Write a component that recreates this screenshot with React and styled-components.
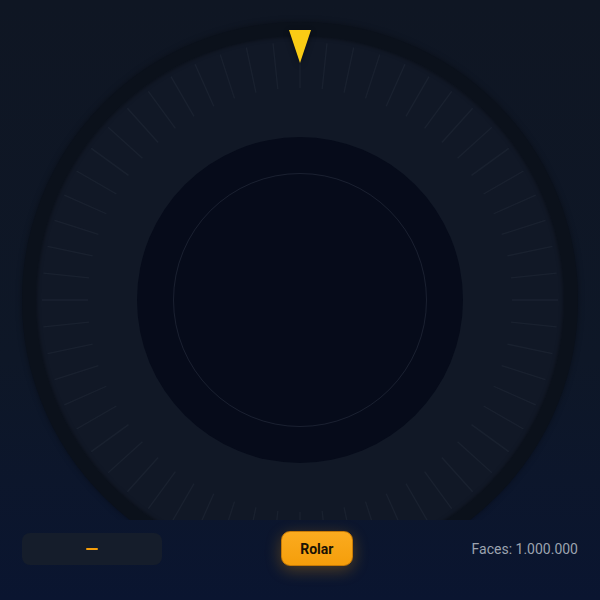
import React from 'react';
import styled, { createGlobalStyle } from 'styled-components';

const TICKS = 60;

const Global = createGlobalStyle`
  html, body {
    margin: 0;
    padding: 0;
    height: 100%;
  }
  body {
    background: linear-gradient(180deg, #0f1623 0%, #0e1727 60%, #0a1530 100%);
    font-family: Roboto, "Liberation Sans", sans-serif;
  }
`;

const Page = styled.div`
  width: 600px;
  height: 600px;
  display: flex;
  flex-direction: column;
  overflow: hidden;
`;

const Stage = styled.div`
  height: 520px;
  padding-top: 22px;
  box-sizing: border-box;
  overflow: hidden;
  display: flex;
  justify-content: center;
`;

const Wheel = styled.div`
  position: relative;
  width: 556px;
  height: 556px;
  flex-shrink: 0;
  box-sizing: border-box;
  border-radius: 50%;
  border: 14px solid #0b111b;
  background: #111826;
  box-shadow: 0 0 6px rgba(0, 0, 0, 0.35), inset 0 0 4px rgba(0, 0, 0, 0.5);
  display: flex;
  align-items: center;
  justify-content: center;
`;

const Ticks = styled.svg`
  position: absolute;
  inset: 0;
  width: 100%;
  height: 100%;
`;

const Hub = styled.div`
  width: 326px;
  height: 326px;
  border-radius: 50%;
  background: #060b1a;
  display: flex;
  align-items: center;
  justify-content: center;
  position: relative;
`;

const HubRing = styled.div`
  width: 254px;
  height: 254px;
  box-sizing: border-box;
  border-radius: 50%;
  border: 1.5px solid rgba(148, 163, 184, 0.14);
`;

const Pointer = styled.div`
  position: absolute;
  top: -6px;
  left: 50%;
  transform: translateX(-50%);
  width: 0;
  height: 0;
  border-left: 11px solid transparent;
  border-right: 11px solid transparent;
  border-top: 33px solid #facc15;
  filter: drop-shadow(0 2px 3px rgba(0, 0, 0, 0.4));
`;

const Controls = styled.div`
  flex: 1;
  display: flex;
  align-items: flex-start;
  justify-content: space-between;
  padding: 11px 22px 0;
`;

const Display = styled.div`
  width: 140px;
  height: 32px;
  margin-top: 2px;
  border-radius: 8px;
  background: #151d2b;
  display: flex;
  align-items: center;
  justify-content: center;
`;

const Dash = styled.span`
  display: block;
  width: 12px;
  height: 2px;
  border-radius: 1px;
  background: #f59e0b;
`;

const RollButton = styled.button`
  width: 72px;
  height: 35px;
  border: 1px solid #c77a06;
  border-radius: 9px;
  background: linear-gradient(180deg, #fbab1f 0%, #f59e0b 100%);
  color: #1a1204;
  font-family: Roboto, "Liberation Sans", sans-serif;
  font-size: 14px;
  font-weight: 700;
  box-shadow: 0 4px 16px rgba(245, 158, 11, 0.3);
  cursor: pointer;
`;

const Faces = styled.div`
  height: 35px;
  display: flex;
  align-items: center;
  color: #9ca3af;
  font-size: 14px;
`;

function TickMarks() {
  const c = 264;
  const lines = [];
  for (let i = 0; i < TICKS; i++) {
    const a = (i * 360) / TICKS * (Math.PI / 180);
    const s = Math.sin(a);
    const k = -Math.cos(a);
    lines.push(
      <line
        key={i}
        x1={c + s * 212}
        y1={c + k * 212}
        x2={c + s * 258}
        y2={c + k * 258}
        stroke="rgba(148,163,184,0.065)"
        strokeWidth="1.3"
      />
    );
  }
  return (
    <Ticks viewBox="0 0 528 528">
      {lines}
    </Ticks>
  );
}

export default function App() {
  return (
    <Page>
      <Global />
      <Stage>
        <Wheel>
          <TickMarks />
          <Hub>
            <HubRing />
          </Hub>
          <Pointer />
        </Wheel>
      </Stage>
      <Controls>
        <Display>
          <Dash />
        </Display>
        <RollButton>Rolar</RollButton>
        <Faces>Faces: 1.000.000</Faces>
      </Controls>
    </Page>
  );
}
